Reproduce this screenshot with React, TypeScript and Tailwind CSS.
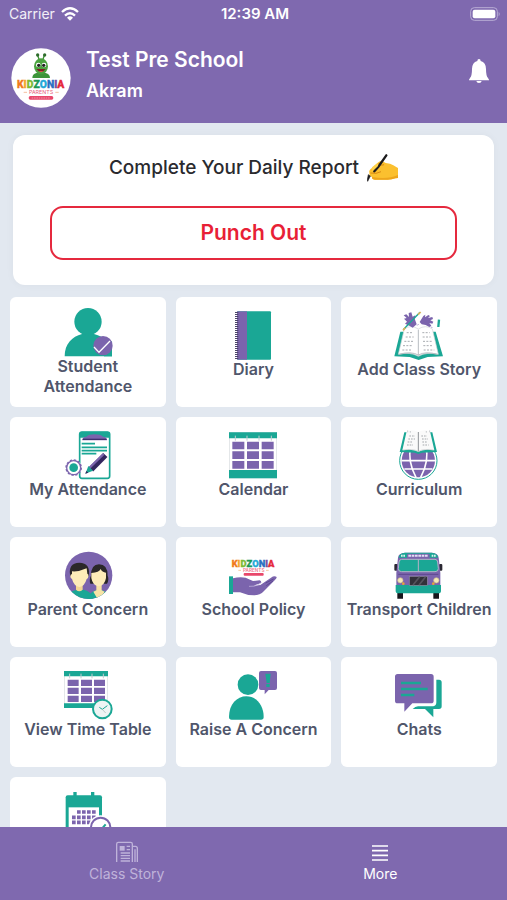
import React from 'react';

const TEAL = '#1aa795';
const PURPLE = '#7b64ad';

const BrandName = ({ x, y, size }: { x: number; y: number; size: number }) => (
    <text
        x={x}
        y={y}
        fontFamily="'Liberation Sans Narrow', Roboto, sans-serif"
        fontSize={size}
        fontWeight="900"
        textAnchor="middle"
        strokeWidth="1"
    >
        <tspan fill="#f07a1c" stroke="#f07a1c">K</tspan>
        <tspan fill="#f2a52b" stroke="#f2a52b">I</tspan>
        <tspan fill="#7dbb35" stroke="#7dbb35">D</tspan>
        <tspan fill="#1d9a55" stroke="#1d9a55">Z</tspan>
        <tspan fill="#23a9d8" stroke="#23a9d8">O</tspan>
        <tspan fill="#2b6fc2" stroke="#2b6fc2">N</tspan>
        <tspan fill="#7a4aa5" stroke="#7a4aa5">I</tspan>
        <tspan fill="#e5283c" stroke="#e5283c">A</tspan>
    </text>
);

const SchoolLogo = () => (
    <svg viewBox="0 0 180 180" className="size-[60px] shrink-0" aria-label="School logo">
        <circle cx="90" cy="90" r="89" fill="#fff" />
        <path d="M84 34 80 22M96 34l4-12" stroke="#3f8f35" strokeWidth="4" />
        <circle cx="80" cy="21" r="5" fill="#2f6d2c" />
        <circle cx="101" cy="21" r="5" fill="#2f6d2c" />
        <path d="M64 90q0-12 12-15h28q13 3 13 15z" fill="#3c9439" />
        <ellipse cx="90" cy="55" rx="21" ry="24" fill="#4ba23f" />
        <circle cx="82" cy="51" r="7" fill="#fff" />
        <circle cx="99" cy="51" r="7" fill="#fff" />
        <circle cx="83" cy="52" r="5" fill="#222" />
        <circle cx="98" cy="52" r="5" fill="#222" />
        <path d="M76 63q14 18 28 0z" fill="#7b1f22" />
        <path d="M83 69q7 6 14 0z" fill="#e8504f" />
        <BrandName x={89} y={119} size={31} />
        <text x="90" y="139" fontFamily="Inter, sans-serif" fontSize="16" textAnchor="middle" fill="#e8617a">PARENTS</text>
        <path d="M38 133h10M133 133h10" stroke="#f0a070" strokeWidth="2" />
        <rect x="53" y="144" width="74" height="11" rx="5" fill="#e8476a" />
        <path d="M62 150h56" stroke="#f7b4c3" strokeWidth="2" strokeDasharray="5 2" />
    </svg>
);

const StudentIcon = () => (
    <>
        <path d="M2 145C2 107 24 86 54 78h36c32 8 54 29 54 67z" fill={TEAL} />
        <path d="M120 100h24v45h-24z" fill={TEAL} />
        <circle cx="72" cy="41" r="41" fill={TEAL} />
        <circle cx="117" cy="113" r="29" fill={PURPLE} />
        <path d="m90 117 15 16 33-34" fill="none" stroke="#fff" strokeWidth="4" />
    </>
);

const DiaryIcon = () => (
    <>
        <rect x="24" y="1" width="102" height="145" rx="3" fill={TEAL} />
        <path d="M24 1h30v145H24z" fill={PURPLE} />
        <path d="M23 3v142" stroke="#4c4468" strokeWidth="10" strokeDasharray="3 3" />
    </>
);

const StoryIcon = () => (
    <>
        <path d="M16 62h106l22 74-46 2-27 9-27-9-46-2z" fill={TEAL} />
        <path d="M28 54q20-14 42 0 22-14 42 0l18 76q-36-8-60 6-24-14-60-6z" fill="#fff" stroke="#cfd3d6" strokeWidth="2" />
        <path d="M70 56v78M12 130q36-10 58 2 22-12 58-2" fill="none" stroke="#b9bdc2" strokeWidth="3" />
        <path d="M35 65h20M82 65h22M32 78h24M83 78h24M28 91h28M84 91h28M24 104h30M85 104h30M22 117h30M86 117h32" stroke="#a8abb0" strokeWidth="3" strokeDasharray="6 4" />
        <path d="M26 13l8-3 8 8-1-12 8-2 4 13 8-4-2 10 6 17-12 10-10-6-13-6 6-6-9-9 8-2z" fill={PURPLE} />
        <path d="m74 33 11-18 6-4-1 8 10-7 5 3-6 6 13-3 2 6-8 4 9 4-3 6-9-2 6 8-6 4-11-6-12-2z" fill={PURPLE} />
        <path d="M75 4 26 55" stroke={TEAL} strokeWidth="4" />
        <path d="m77 3-8 8M31 50l-7 8" stroke="#d9b55c" strokeWidth="5" />
        <path d="m132 26-2 22" stroke={TEAL} strokeWidth="7" />
        <path d="m67 43 3-3M108 47l3 3" stroke={PURPLE} strokeWidth="3" />
    </>
);

const MyAttendanceIcon = () => (
    <>
        <rect x="47" y="3" width="90" height="139" rx="7" fill="#fff" stroke={TEAL} strokeWidth="5" />
        <path d="M47 7q0-5 6-5h78q6 0 6 5v13H47z" fill={TEAL} />
        <path d="M55 28q0-10 12-11 8-7 25-7t25 7q12 1 12 11z" fill={PURPLE} />
        <path d="M56 25h72" stroke="#40306f" strokeWidth="4" />
        <path d="M53 38h40M53 49h76M53 59h76M53 68h44" stroke={TEAL} strokeWidth="5" />
        <path d="m124 72-43 43" stroke="#33265f" strokeWidth="18" />
        <path d="m119 69-43 42" stroke={PURPLE} strokeWidth="7" />
        <path d="m73 105 14 14-23 9z" fill={TEAL} />
        <path d="m64 128 9-3-6-5z" fill="#33265f" />
        <circle cx="29" cy="110" r="24" fill="#fff" />
        <circle cx="29" cy="110" r="21" fill="none" stroke={PURPLE} strokeWidth="4" />
        <circle cx="29" cy="110" r="23" fill="none" stroke={PURPLE} strokeWidth="4" strokeDasharray="7 5" />
        <circle cx="29" cy="110" r="13" fill={TEAL} />
    </>
);

const CalendarIcon = () => (
    <>
        <rect x="1" y="4" width="142" height="137" fill="#fff" stroke="#d7dcdf" strokeWidth="2" />
        <path d="M0 4h144v18H0zM0 117h144v25H0z" fill={TEAL} />
        <path d="M10 32h36v23H10zM54 32h36v23H54zM98 32h36v23H98zM10 61h36v23H10zM54 61h36v23H54zM98 61h36v23H98zM10 90h36v23H10zM54 90h36v23H54zM98 90h36v23H98z" fill={PURPLE} />
        <path d="M19 14v15M54 14v15M90 14v15M127 14v15" stroke="#c4cbd0" strokeWidth="3" />
    </>
);

const CurriculumIcon = () => (
    <>
        <circle cx="70" cy="89" r="56" fill="#fff" stroke={TEAL} strokeWidth="3" />
        <circle cx="70" cy="89" r="50" fill={PURPLE} />
        <path d="M19 89h102M28 114h84M48 45q-12 44 15 94M92 45q12 44-15 94" fill="none" stroke="#fff" strokeWidth="5" />
        <path d="M28 4h84l14 59-45 2-11 4-11-4-45-2z" fill={TEAL} />
        <path d="M35 1q18-8 35 2 17-10 35-2l13 57q-30-5-48 4-18-9-48-4z" fill="#fafafa" />
        <path d="M70 3v59" stroke="#8e9297" strokeWidth="3" />
        <path d="M38-2v6M46 0v5M94 0v5M104-2v6" stroke="#adb2b6" strokeWidth="2" />
        <path d="M43 15h17M79 15h17M40 24h20M81 24h18M38 33h14M82 33h14M36 42h18M83 42h18" stroke="#a5a9ad" strokeWidth="3" strokeDasharray="5 3" />
        <path d="M24 57q27-5 46 4 19-9 46-4" fill="none" stroke="#c3c7ca" strokeWidth="2" />
    </>
);

const ParentIcon = () => (
    <>
        <defs>
            <clipPath id="parents">
                <circle cx="74" cy="73" r="71" />
            </clipPath>
        </defs>
        <g clipPath="url(#parents)">
            <path d="M0 0h148v148H0z" fill={PURPLE} />
            <path d="M79 98q-4-14 2-24 0-34 24-34 26 0 26 34 5 11-2 24z" fill="#2b2829" />
            <path d="M72 148q2-24 24-30h18q24 6 27 30z" fill={TEAL} />
            <path d="M97 96h16v22l9 4-14 26h-5L88 122l9-4z" fill="#f8e3a5" />
            <path d="M82 66q24-2 28-12 4 10 16 11v16q-4 23-22 25-18-2-22-25z" fill="#fdecb8" />
            <path d="M6 148q3-24 26-30l26-2q26 4 30 32z" fill={TEAL} />
            <path d="M36 98h20v18q-10 10-20 0z" fill="#f3d793" />
            <path d="M19 76q-8-40 27-41 35 1 28 41z" fill="#2b2829" />
            <path d="M24 61q20 2 44-9l2 16q5 1 3 9-1 6-5 7-6 22-22 24-16-2-22-24-5-2-5-8t5-7z" fill="#fdecb8" />
        </g>
    </>
);

const PolicyIcon = () => (
    <>
        <BrandName x={72} y={47} size={28} />
        <text x="74" y="63" fontFamily="Inter, sans-serif" fontSize="14" textAnchor="middle" fill="#ef7a8d">PARENTS</text>
        <rect x="44" y="66" width="60" height="8" rx="3" fill="#e8476a" />
        <path d="M28 58h8M111 58h8" stroke="#f0b070" strokeWidth="2" />
        <path d="M0 76h12v53H0z" fill={TEAL} />
        <path d="M12 82q20-6 38-2 12 5 22 10l20-2q8 4 2 9l-20 7 20-2 32-22q10-7 17-2 1 4-6 10l-32 32q-12 13-30 13-22 0-42-9H12z" fill={PURPLE} />
        <path d="M60 106q16 2 30-6l8-6" fill="none" stroke="#c9bde3" strokeWidth="2" />
        <path d="m110 96 24-12M112 104l20-14" stroke="#4d3a80" strokeWidth="2" />
    </>
);

const BusIcon = () => (
    <>
        <path d="M7 120h17v23H7zM115 120h17v23h-17z" fill="#17151b" />
        <rect x="-2" y="39" width="10" height="20" rx="3" fill="#2b2833" />
        <rect x="132" y="39" width="10" height="20" rx="3" fill="#2b2833" />
        <path d="M9 20Q10 6 30 5h80q20 1 21 15l5 45v53H4V65z" fill={PURPLE} />
        <path d="M11 20Q12 6 30 5h80q18 1 19 15z" fill={TEAL} />
        <rect x="36" y="8" width="68" height="13" rx="3" fill={PURPLE} />
        <path d="M40 14h60" stroke="#e3ddf3" strokeWidth="6" strokeDasharray="8 2" />
        <path d="M18 14h12M110 14h12" stroke="#d9f2ec" strokeWidth="6" strokeDasharray="5 2" />
        <path d="M20 25h100q7 0 8 8l2 20q0 9-10 9H20q-10 0-10-9l2-20q1-8 8-8z" fill={TEAL} stroke="#b5b2c7" strokeWidth="3" />
        <path d="M70 25v37" stroke="#b5b2c7" strokeWidth="3" />
        <path d="M10 70h120" stroke="#5d478f" strokeWidth="3" />
        <path d="M2 102h136v18q0 7-8 7H10q-8 0-8-7z" fill={TEAL} />
        <rect x="43" y="76" width="54" height="27" fill="#33313a" stroke="#8d89a0" strokeWidth="2" />
        <path d="m54 102 20-25M72 102l20-25" stroke="#55535d" strokeWidth="5" />
        <circle cx="16" cy="88" r="8" fill="#f6e9b8" stroke="#c7b987" strokeWidth="2" />
        <circle cx="124" cy="88" r="8" fill="#f6e9b8" stroke="#c7b987" strokeWidth="2" />
        <circle cx="25" cy="98" r="4" fill="#e9a33a" />
        <circle cx="115" cy="98" r="4" fill="#e9a33a" />
    </>
);

const TimeTableIcon = () => (
    <>
        <rect x="1" y="1" width="130" height="108" fill="#fff" stroke="#d7dcdf" strokeWidth="2" />
        <path d="M0 0h132v16H0zM0 97h132v14H0z" fill={TEAL} />
        <path d="M11 26h33v19H11zM51 26h33v19H51zM90 26h33v19H90zM11 50h33v19H11zM51 50h33v19H51zM90 50h33v19H90zM11 74h33v19H11zM51 74h33v19H51zM90 74h33v19H90z" fill={PURPLE} />
        <path d="M17 8v14M51 8v14M84 8v14M118 8v14" stroke="#c4cbd0" strokeWidth="3" />
        <circle cx="115" cy="114" r="28" fill="#eef4f4" stroke={TEAL} strokeWidth="6" />
        <path d="m106 109 9 6 15-11" fill="none" stroke={TEAL} strokeWidth="3" />
        <path d="m115 115 10 11" stroke="#a8b4b5" strokeWidth="2" />
    </>
);

const RaiseIcon = () => (
    <>
        <circle cx="57" cy="41" r="31" fill={TEAL} />
        <path d="M0 138c0-38 24-62 52-62s52 24 52 62q0 8-8 8H8q-8 0-8-8z" fill={TEAL} />
        <path d="M96 0h42q6 0 6 6v45q0 6-6 6h-19l-12 13V57H96q-6 0-6-6V6q0-6 6-6z" fill={PURPLE} />
        <path d="M109 8h16l-3 28h-9zM112 39h10v9h-10z" fill={TEAL} />
    </>
);

const ChatsIcon = () => (
    <>
        <path d="M124 26h8q8 0 8 8v72q0 8-8 8h-17v25L90 114H53q8-8 16-8h46q9-2 9-12z" fill={TEAL} />
        <path d="M8 9h100q8 0 8 8v72q0 8-8 8H52l-24 25V97H8q-8 0-8-8V17q0-8 8-8z" fill={PURPLE} />
        <path d="M18 36h60M18 54h80M18 72h40" stroke={TEAL} strokeWidth="7" />
    </>
);

const PlannerIcon = () => (
    <>
        <path d="M28 3h10v14H28zM81 3h10v14H81z" fill={TEAL} />
        <path d="M11 13h97q6 0 6 6v123H5V19q0-6 6-6z" fill={TEAL} />
        <path d="M14 49h91v62H14z" fill="#fff" />
        <path d="M39 63h56M24 79h71M24 94h60" stroke={PURPLE} strokeWidth="11" strokeDasharray="11 4" />
        <circle cx="110" cy="109" r="36" fill="#fff" />
        <circle cx="110" cy="109" r="29" fill="#fff" stroke={PURPLE} strokeWidth="6" />
        <path d="m96 110 10 12 19-22" fill="none" stroke={TEAL} strokeWidth="6" />
    </>
);

const tiles = [
    { label: 'Student Attendance', icon: StudentIcon },
    { label: 'Diary', icon: DiaryIcon },
    { label: 'Add Class Story', icon: StoryIcon },
    { label: 'My Attendance', icon: MyAttendanceIcon },
    { label: 'Calendar', icon: CalendarIcon },
    { label: 'Curriculum', icon: CurriculumIcon },
    { label: 'Parent Concern', icon: ParentIcon },
    { label: 'School Policy', icon: PolicyIcon },
    { label: 'Transport Children', icon: BusIcon },
    { label: 'View Time Table', icon: TimeTableIcon },
    { label: 'Raise A Concern', icon: RaiseIcon },
    { label: 'Chats', icon: ChatsIcon },
    { label: '', icon: PlannerIcon },
];

const StatusBar = () => (
    <div className="grid grid-cols-3 items-center h-7 pl-[9px] pr-[6px] text-sm">
        <div className="flex items-center gap-[6px]">
            <span className="text-white/90">Carrier</span>
            <svg viewBox="0 0 54 42" className="w-[18px] h-[14px]" fill="none" stroke="#fff" strokeWidth="7">
                <path d="M3 15q24-22 48 0M12 26q15-14 30 0" />
                <path d="m18 32 9 9 9-9q-9-8-18 0z" fill="#fff" stroke="none" />
            </svg>
        </div>
        <span className="text-center text-[15px] font-semibold whitespace-nowrap">12:39 AM</span>
        <svg viewBox="0 0 93 42" className="w-[31px] h-[14px] justify-self-end">
            <rect x="2" y="2" width="80" height="38" rx="11" fill="none" stroke="#b8acd4" strokeWidth="3" />
            <rect x="8" y="8" width="68" height="26" rx="6" fill="#fff" />
            <path d="M86 14q6 7 0 14z" fill="#b8acd4" />
        </svg>
    </div>
);

const Header = () => (
    <header className="bg-[#7f69af] text-white shrink-0">
        <StatusBar />
        <div className="flex items-start pt-5 pb-[15px] pl-[11px] pr-[5px]">
            <SchoolLogo />
            <div className="flex-1 flex flex-col gap-[7px] ml-[15px] font-semibold">
                <h1 className="text-[21px] leading-6">Test Pre School</h1>
                <p className="text-lg leading-6">Akram</p>
            </div>
            <button type="button" aria-label="Notifications" className="p-[11px]">
                <svg viewBox="0 0 72 72" className="size-6" fill="#fff">
                    <path d="M36 0q5 0 5 6 16 5 16 24 0 21 6 27l3 5v2H6v-2l3-5q6-6 6-27 0-19 16-24 0-6 5-6zM28 66h16q-1 6-8 6t-8-6z" />
                </svg>
            </button>
        </div>
    </header>
);

const WritingHand = () => (
    <svg viewBox="0 0 93 84" className="w-[31px] h-7" aria-hidden="true">
        <path d="M7 56Q4 48 16 41l16-15q8-7 15-4l9 5 13 2q10 3 20 11l4 2v30l-8 1q-12 5-28 4H24q-10-1-9-8-8-2-8-13z" fill="#fbc02f" />
        <path d="M15 69q-1 8 9 8h33q16 1 28-4l8-1v-9q-30 14-78 6z" fill="#eda51d" />
        <path d="M10 57q18 4 32-4M33 30q14 6 18 2" fill="none" stroke="#d98a12" strokeWidth="3" />
        <path d="M58 4 34 38 22 52" stroke="#1c1b1d" strokeWidth="7" strokeLinecap="round" fill="none" />
        <path d="M10 66 2 82l-1-4 3-16z" fill="#1c1b1d" stroke="#1c1b1d" strokeWidth="2" />
        <path d="m15 40 16-12q6 4 0 10L16 52z" fill="#ffd24a" />
    </svg>
);

const DailyReport = () => (
    <section className="mx-[3px] px-[37px] pt-[17px] pb-[25px] bg-white rounded-xl shadow-[0_0_8px_rgba(0,0,0,0.04)]">
        <div className="h-8 flex items-center justify-center gap-2">
            <h2 className="text-[19px] font-medium text-[#2a2a2e]">Complete Your Daily Report</h2>
            <WritingHand />
        </div>
        <button
            type="button"
            className="mt-[22px] w-full h-[54px] rounded-[13px] border-2 border-[#e5293e] text-[#e81f36] text-[21px] font-semibold"
        >
            Punch Out
        </button>
    </section>
);

const BottomNav = () => (
    <nav className="grid grid-cols-2 shrink-0 bg-[#7f69af] text-white text-sm leading-5">
        <a href="#class-story" className="flex flex-col items-center pt-[13px] pb-4 text-[#bfb3da]">
            <svg viewBox="0 0 72 72" className="size-6" fill="none" stroke="currentColor" strokeWidth="4">
                <path d="M5 66V12q0-5 5-5h37q5 0 5 5v54M52 19h9q6 0 6 6v41M60 28v38" />
                <path d="M14 18h15v14H14z" fill="currentColor" stroke="none" />
                <path d="M35 19h10M35 29h10M17 39h28M17 47h28M17 55h28M17 63h28" strokeWidth="4" />
            </svg>
            <span>Class Story</span>
        </a>
        <a href="#more" className="flex flex-col items-center pt-[13px] pb-4">
            <svg viewBox="0 0 72 72" className="size-6" fill="none" stroke="currentColor" strokeWidth="5">
                <path d="M12 18h48M12 32h48M12 46h48M12 60h48" />
            </svg>
            <span>More</span>
        </a>
    </nav>
);

const App = () => {
    return (
        <div className="h-screen flex flex-col bg-[#e2e8f0] font-['Inter',sans-serif]">
            <Header />
            <main className="flex-1 min-h-0 overflow-y-auto [scrollbar-width:none] px-[10px] pt-3">
                <DailyReport />
                <div className="grid grid-cols-3 gap-[10px] mt-3">
                    {tiles.map(({ label, icon: Icon }, i) => (
                        <button
                            key={i}
                            type="button"
                            className="min-w-0 min-h-[110px] px-[2px] flex flex-col items-center justify-center bg-white rounded-md text-base leading-5 font-semibold text-[#50566b]"
                        >
                            <svg viewBox="0 0 144 144" className="size-12 shrink-0 overflow-visible">
                                <Icon />
                            </svg>
                            <span className="min-h-[34px] max-w-full">{label}</span>
                        </button>
                    ))}
                </div>
            </main>
            <BottomNav />
        </div>
    );
};

export default App;
